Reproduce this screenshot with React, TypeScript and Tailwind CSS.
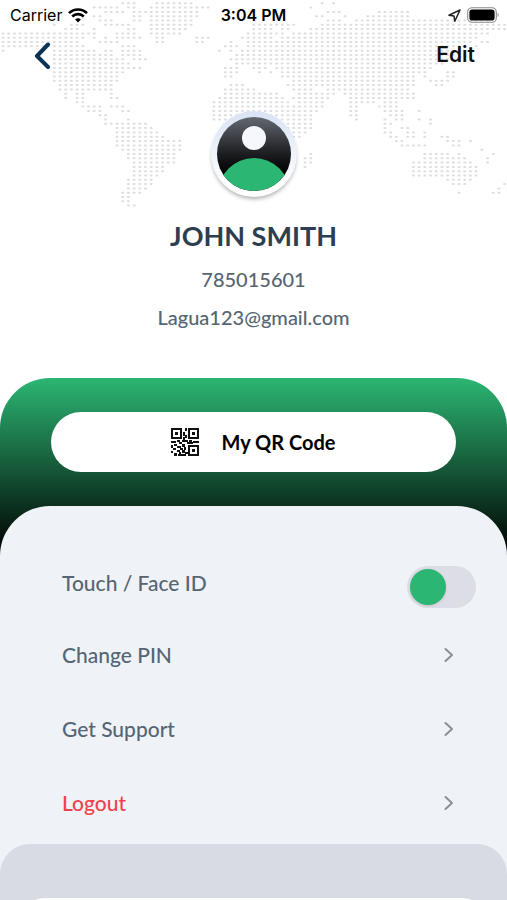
import { useId, useState } from "react";

type Range = [number, number];

// Dotted world map: one entry per row, each range is first and last column
const MAP_ROWS: Range[][] = [
  [[21, 23], [27, 33], [56, 56], [58, 58]],
  [[16, 20], [22, 23], [26, 33], [34, 36], [54, 54]],
  [[18, 21], [23, 34], [57, 59], [66, 71]],
  [[16, 17], [23, 24], [26, 34], [44, 44], [55, 56], [60, 60], [64, 71]],
  [[17, 19], [23, 24], [26, 33], [44, 44], [57, 59], [62, 85]],
  [[9, 9], [12, 14], [18, 22], [26, 33], [44, 51], [56, 88]],
  [[11, 13], [16, 16], [22, 23], [26, 32], [44, 47], [49, 50], [54, 88]],
  [[0, 16], [20, 23], [26, 31], [43, 49], [51, 85]],
  [[0, 14], [16, 16], [18, 18], [20, 24], [27, 28], [34, 36], [42, 47], [49, 83]],
  [[0, 13], [17, 20], [27, 28], [34, 35], [40, 40], [43, 82], [84, 85]],
  [[0, 14], [21, 23], [39, 41], [43, 80], [83, 83]],
  [[0, 0], [9, 16], [18, 19], [21, 24], [38, 38], [40, 40], [42, 80]],
  [[9, 19], [21, 24], [41, 79]],
  [[9, 21], [23, 25], [40, 78]],
  [[9, 22], [41, 77]],
  [[9, 22], [23, 24], [39, 41], [44, 46], [48, 75]],
  [[9, 21], [39, 41], [45, 45], [47, 47], [49, 74], [78, 79]],
  [[9, 20], [39, 40], [49, 72], [74, 74], [78, 79]],
  [[9, 20], [51, 72], [75, 78]],
  [[10, 19], [40, 42], [50, 72], [76, 77]],
  [[10, 19], [39, 44], [51, 54], [57, 71]],
  [[11, 11], [13, 14], [19, 19], [39, 48], [52, 58], [60, 72]],
  [[11, 11], [13, 14], [19, 20], [38, 49], [51, 57], [61, 72]],
  [[13, 14], [37, 50], [52, 56], [61, 65], [67, 69]],
  [[14, 17], [19, 21], [37, 56], [61, 62], [66, 69]],
  [[15, 17], [21, 22], [37, 55], [61, 62], [67, 70], [73, 73]],
  [[17, 18], [37, 54], [61, 62], [68, 70]],
  [[18, 18], [22, 22], [37, 54], [62, 62], [67, 67], [69, 70], [73, 73], [75, 75]],
  [[18, 25], [50, 54], [67, 68], [75, 75]],
  [[20, 26], [50, 54], [67, 67], [70, 71]],
  [[20, 27], [51, 53], [67, 68], [71, 72], [74, 74]],
  [[20, 28], [51, 52], [68, 69], [71, 72], [74, 74], [77, 78]],
  [[20, 31], [69, 70], [78, 80], [82, 82]],
  [[20, 31], [70, 74], [79, 80]],
  [[21, 31], [84, 84]],
  [[22, 30], [54, 54], [74, 78], [80, 80], [86, 86]],
  [[22, 30], [53, 54], [74, 81], [85, 85]],
  [[23, 30], [53, 54], [72, 82], [85, 85]],
  [[23, 28], [53, 53], [72, 83]],
  [[23, 28], [72, 83]],
  [[23, 27], [72, 83]],
  [[22, 26], [78, 82]],
  [[22, 26], [79, 81], [88, 88]],
  [[22, 25], [87, 87]],
  [[21, 24], [80, 80], [86, 87]],
  [[21, 22]],
  [[21, 22]],
  [[22, 23]],
];

const mapPath = MAP_ROWS.map((ranges, row) =>
  ranges
    .map(([from, to]) => {
      let d = "";
      for (let col = from; col <= to; col++) {
        d += `M${(2.5 + col * 5.7).toFixed(1)} ${(3.3 + row * 4.305).toFixed(1)}h1`;
      }
      return d;
    })
    .join("")
).join("");

const WorldMap = () => (
  <svg viewBox="0 0 507 215" className="absolute inset-x-0 top-0 w-full" aria-hidden="true">
    <path d={mapPath} stroke="#dcdee2" strokeWidth="2" strokeLinecap="round" />
  </svg>
);

const StatusBar = () => (
  <div className="relative grid h-[30px] grid-cols-3 items-center px-2 font-['Inter'] text-base text-black">
    <div className="flex items-center gap-1.5 pl-0.5">
      <span>Carrier</span>
      <svg viewBox="0 0 20 15" className="h-[15px] w-5" fill="none" stroke="#000" strokeWidth="2.6" aria-hidden="true">
        <path d="M1 5.2a12.7 12.7 0 0 1 18 0" />
        <path d="M4.2 8.5a8.2 8.2 0 0 1 11.6 0" />
        <path d="M10 14.6l-2.9-3a4.1 4.1 0 0 1 5.8 0z" fill="#000" stroke="none" />
      </svg>
    </div>
    <span className="text-center font-semibold">3:04 PM</span>
    <div className="flex items-center justify-end gap-1.5">
      <svg viewBox="0 0 13 13" className="size-[13px]" fill="none" stroke="#222" strokeWidth="1.5" strokeLinejoin="round" aria-hidden="true">
        <path d="M12 1L1 6.2l5 .9.8 5.1z" />
      </svg>
      <svg viewBox="0 0 32 16" className="h-4 w-8" aria-hidden="true">
        <rect x="0.7" y="0.7" width="28.6" height="14.6" rx="4.4" fill="none" stroke="#8b8b8b" strokeWidth="1.1" />
        <rect x="2.4" y="2.4" width="25.2" height="11.2" rx="2.8" />
        <path d="M30.6 5.8c1.4.6 1.4 3.8 0 4.4z" fill="#8b8b8b" />
      </svg>
    </div>
  </div>
);

const Avatar = () => (
  <svg viewBox="0 0 100 100" className="size-[100px]" role="img" aria-label="Profile photo">
    <defs>
      <linearGradient id="face" x1="0" y1="0" x2="0" y2="1">
        <stop offset="0.12" stopColor="#656a73" />
        <stop offset="0.5" stopColor="#1c1d20" />
        <stop offset="0.7" stopColor="#000" />
      </linearGradient>
      <linearGradient id="ring" x1="0" y1="0" x2="0" y2="1">
        <stop offset="0" stopColor="#d9e3f5" />
        <stop offset="0.9" stopColor="#fff" />
      </linearGradient>
      <clipPath id="disc">
        <circle cx="50" cy="50" r="37" />
      </clipPath>
      <filter id="soft" x="-20%" y="-20%" width="140%" height="140%">
        <feGaussianBlur stdDeviation="2" />
      </filter>
    </defs>
    <circle cx="50" cy="53" r="42" fill="#000" fillOpacity="0.32" filter="url(#soft)" />
    <circle cx="50" cy="50" r="43" fill="url(#ring)" />
    <g clipPath="url(#disc)">
      <rect width="100" height="100" fill="url(#face)" />
      <circle cx="50" cy="90" r="36" fill="#2cb673" />
    </g>
    <circle cx="50" cy="34" r="12" fill="#f5f7fc" />
  </svg>
);

const QrIcon = () => (
  <svg viewBox="0 0 28 28" className="size-7" fill="#111" aria-hidden="true">
    <g fill="none" stroke="#111" strokeWidth="2">
      <rect x="1" y="1" width="9" height="9" />
      <rect x="18" y="1" width="9" height="9" />
      <rect x="18" y="18" width="9" height="9" />
    </g>
    <path d="M4 4h3v3H4zM21 4h3v3h-3zM21 21h3v3h-3z" />
    <path d="M14 0h2v3h-2zM12 4h2v4h-2zM14 7h2v3h-2zM12 9h2v3h-2z" />
    <path d="M0 13h5v2H0zM6 12h3v2H6zM8 14h3v2H8zM11 12h6v2h-6zM18 12h3v2h-3zM22 13h6v2h-6zM16 14h6v2h-6z" />
    <path d="M0 17h2v3H0zM3 16h3v2H3zM6 18h4v2H6zM11 16h3v3h-3zM2 20h3v2H2zM0 23h2v2H0zM3 25h3v3H3zM6 22h3v2H6zM9 20h3v2H9zM8 24h2v2H8zM11 22h3v3h-3zM13 19h2v3h-2zM14 24h3v2h-3zM7 26h8v2H7z" />
  </svg>
);

interface MenuItemProps {
  label: string;
  danger?: boolean;
}

const MenuItem = ({ label, danger = false }: MenuItemProps) => (
  <button type="button" className="flex h-[74px] w-full items-center justify-between pr-[22px] text-left">
    <span className={danger ? "text-[#f0424c]" : "text-[#566573]"}>{label}</span>
    <svg viewBox="0 0 10 16" className="h-4 w-[10px]" fill="none" stroke="#8b8f96" strokeWidth="2" strokeLinecap="round" strokeLinejoin="round" aria-hidden="true">
      <path d="M1.5 2l6.5 6-6.5 6" />
    </svg>
  </button>
);

const App = () => {
  const toggleId = useId();
  const [touchId, setTouchId] = useState(false);

  return (
    <div className="min-h-screen overflow-hidden bg-white font-['Lato',sans-serif]">
      <header className="relative">
        <WorldMap />
        <StatusBar />
        <div className="relative flex h-[50px] items-center justify-between px-8">
          <button type="button" aria-label="Back">
            <svg viewBox="0 0 20 28" className="h-7 w-5" fill="none" stroke="#0b3354" strokeWidth="4" strokeLinecap="round" strokeLinejoin="round" aria-hidden="true">
              <path d="M16 3.5L5 15l11 11" />
            </svg>
          </button>
          <button type="button" className="font-['Inter'] text-[21px] font-semibold text-[#111]">Edit</button>
        </div>
        <div className="relative flex flex-col items-center pt-6 pb-[42px]">
          <Avatar />
          <h1 className="mt-3 text-[27px] leading-10 font-bold text-[#2c3e50]">JOHN SMITH</h1>
          <p className="mt-1 text-xl leading-[38px] font-medium text-[#566573]">785015601</p>
          <p className="text-xl leading-[38px] font-medium text-[#566573]">Lagua123@gmail.com</p>
        </div>
      </header>

      <main className="rounded-t-[50px] bg-linear-to-b/srgb from-[#2cb673] to-black to-[175px]">
        <div className="px-[51px] py-[34px]">
          <button type="button" className="flex h-[60px] w-full items-center justify-center gap-[22px] rounded-full bg-white text-xl font-bold text-black">
            <QrIcon />
            My QR Code
          </button>
        </div>

        <section className="rounded-t-[50px] bg-[#eff3f8] pt-10 text-[21px] font-medium">
          <div className="pr-[31px] pl-[62px]">
            <div className="flex h-[72px] items-start justify-between pt-5">
              <label htmlFor={toggleId} className="leading-[34px] text-[#566573]">Touch / Face ID</label>
              <input
                id={toggleId}
                type="checkbox"
                role="switch"
                checked={touchId}
                onChange={(e) => setTouchId(e.target.checked)}
                className="h-[42px] w-[69px] cursor-pointer appearance-none rounded-full bg-[#dddee5] p-[3px] before:block before:size-9 before:rounded-full before:bg-[#2cb673] before:shadow checked:before:ml-auto"
              />
            </div>
            <MenuItem label="Change PIN" />
            <MenuItem label="Get Support" />
            <MenuItem label="Logout" danger />
          </div>

          <div className="mt-1 rounded-t-[30px] bg-[#d8dbe4] px-6 pt-[54px]">
            <div className="h-8 rounded-t-[20px] bg-white" />
          </div>
        </section>
      </main>
    </div>
  );
};

export default App;
